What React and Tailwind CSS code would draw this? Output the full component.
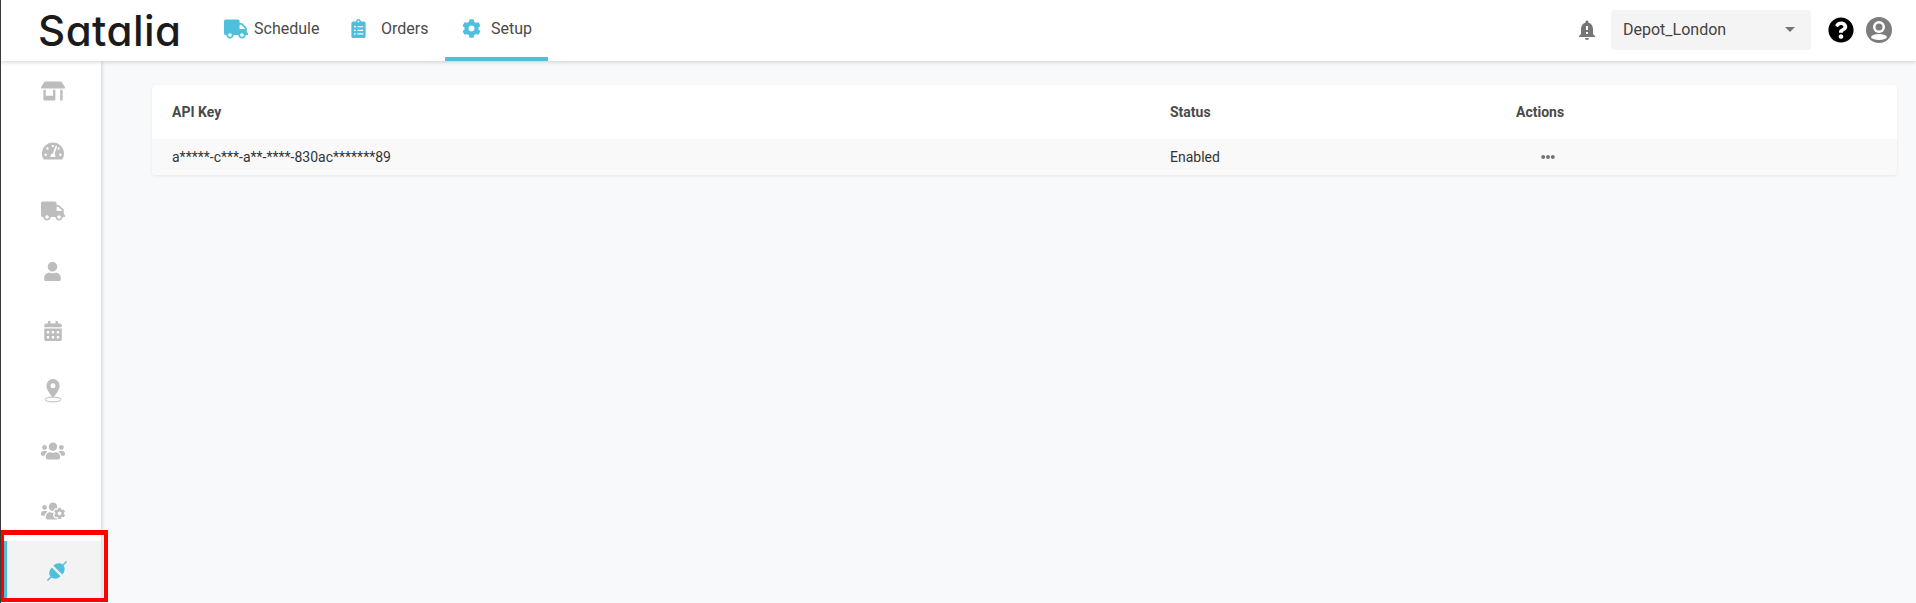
import React from 'react';
import {
    FaTruck,
    FaClipboardList,
    FaCog,
    FaQuestionCircle,
    FaStoreAlt,
    FaTachometerAlt,
    FaUser,
    FaCalendarAlt,
    FaUsers,
    FaUsersCog,
    FaEllipsisH,
} from 'react-icons/fa';
import { MdNotificationImportant } from 'react-icons/md';

function MarkerIcon() {
    return (
        <svg width="18" height="24" viewBox="0 0 18 24" fill="#bdbdbd">
            <path fillRule="evenodd" d="M9 0a6.6 6.6 0 0 0-6.6 6.6C2.400 11 7 16.500 9 19c2-2.500 6.600-8 6.600-12.400A6.600 6.600 0 0 0 9 0zm0 9.200a2.500 2.500 0 1 1 0-5 2.500 2.500 0 0 1 0 5z" />
            <ellipse cx="9" cy="20.500" rx="8" ry="2.400" fill="none" stroke="#bdbdbd" strokeWidth="1" />
        </svg>
    );
}

function PlugIcon() {
    return (
        <svg width="20" height="20" viewBox="0 0 20 20" fill="#4fc0db" className="ml-[6px] overflow-visible">
            <g transform="rotate(45 10 10)">
                <path d="M3.800 8.800h12.400C16.200 4.500 13.500 1.800 10.700 1.500V-3.500H9.300v5C6.500 1.800 3.800 4.500 3.800 8.800z" />
                <path d="M3.800 11.200h12.400C16.200 15.500 13.500 18.200 10.700 18.500v5H9.300v-5C6.500 18.200 3.800 15.500 3.800 11.200z" />
            </g>
        </svg>
    );
}

function UserIcon() {
    return (
        <svg width="26" height="26" viewBox="0 0 26 26" className="ml-[12px] mr-[24px]">
            <circle cx="13" cy="13" r="13" fill="#7d7d7d" />
            <circle cx="13" cy="10" r="6" fill="#ffffff" />
            <circle cx="13" cy="10" r="3.500" fill="#7d7d7d" />
            <ellipse cx="13" cy="20" rx="8" ry="3" fill="#ffffff" />
        </svg>
    );
}

const sideItems = [
    <FaStoreAlt size={24} />,
    <FaTachometerAlt size={22} />,
    <FaTruck size={24} />,
    <FaUser size={19} />,
    <FaCalendarAlt size={20} />,
    <MarkerIcon />,
    <FaUsers size={24} />,
    <FaUsersCog size={24} />,
];

function NavItem({ icon, label, active, className }) {
    return (
        <div className={`h-[61px] flex items-center border-b-4 ${active ? 'border-[#4fc0db]' : 'border-transparent'} ${className}`}>
            <span className="text-[#4fc0db]">{icon}</span>
            <span className="text-[#4a4a4a] text-[16px]">{label}</span>
        </div>
    );
}

function App() {
    return (
        <div className="h-[603px] w-[1916px] overflow-hidden flex flex-col bg-[#f8f9fa] font-['Roboto',sans-serif] border-l border-[#3a3a3a] relative">
            <header className="h-[61px] shrink-0 bg-white flex items-center shadow-[0_1px_4px_rgba(0,0,0,0.18)] z-20">
                <span className="ml-[37px] w-[146px] text-[#1b1b1b] text-[42px] leading-none font-['Inter',sans-serif] font-medium tracking-[0.5px] [font-feature-settings:'cv11']">Satalia</span>
                <nav className="ml-[24px] flex items-center">
                    <NavItem icon={<FaTruck size={24} />} label="Schedule" className="w-[117px] pl-[16px] gap-[6px]" />
                    <NavItem icon={<FaClipboardList size={19} />} label="Orders" className="w-[120px] pl-[24px] gap-[13px]" />
                    <NavItem icon={<FaCog size={19} />} label="Setup" active className="w-[103px] pl-[17px] gap-[10px]" />
                </nav>
                <div className="ml-auto flex items-center pb-[2px]">
                    <MdNotificationImportant size={24} className="text-[#757575]" />
                    <div className="ml-[12px] w-[200px] h-[40px] rounded-[4px] bg-[#f4f4f4] flex items-center justify-between pl-[12px] pr-[16px] text-[16px] text-[#424242]">
                        Depot_London
                        <span className="w-0 h-0 border-x-[5px] border-x-transparent border-t-[5px] border-t-[#757575]" />
                    </div>
                    <FaQuestionCircle size={26} className="ml-[17px] text-black" />
                    <UserIcon />
                </div>
            </header>
            <div className="flex flex-1 min-h-0">
                <aside className="w-[100px] shrink-0 bg-white shadow-[1px_0_4px_rgba(0,0,0,0.15)] flex flex-col pl-[3px] z-10">
                    {sideItems.map((icon, i) => (
                        <div key={i} className="h-[60px] shrink-0 flex items-center justify-center text-[#bdbdbd]">
                            {icon}
                        </div>
                    ))}
                    <div className="h-[60px] flex items-center justify-center bg-[#f3f3f3] border-l-[3px] border-[#4fc0db]">
                        <PlugIcon />
                    </div>
                </aside>
                <main className="flex-1 pl-[51px] pr-[19px] pt-[24px]">
                    <div className="bg-white rounded-[4px] shadow-[0_1px_3px_rgba(0,0,0,0.08)] overflow-hidden">
                        <div className="h-[54px] flex items-center px-[20px] text-[14px] font-bold text-[#4a4a4a]">
                            <div className="w-[998px]">API Key</div>
                            <div className="w-[347px]">Status</div>
                            <div className="-ml-[1px]">Actions</div>
                        </div>
                        <div className="h-[36px] flex items-center px-[20px] text-[14px] bg-[#f9f9f9] text-[#333333]">
                            <div className="w-[998px]">a*****-c***-a**-****-830ac*******89</div>
                            <div className="w-[347px]">Enabled</div>
                            <FaEllipsisH size={14} className="ml-[24px] text-[#757575]" />
                        </div>
                    </div>
                </main>
            </div>
            <div className="absolute left-0 top-[530px] w-[107px] h-[72px] border-t-[5px] border-r-[4px] border-b-[4px] border-l-[3px] border-[#ff0000] z-30" />
        </div>
    );
}

export default App;
